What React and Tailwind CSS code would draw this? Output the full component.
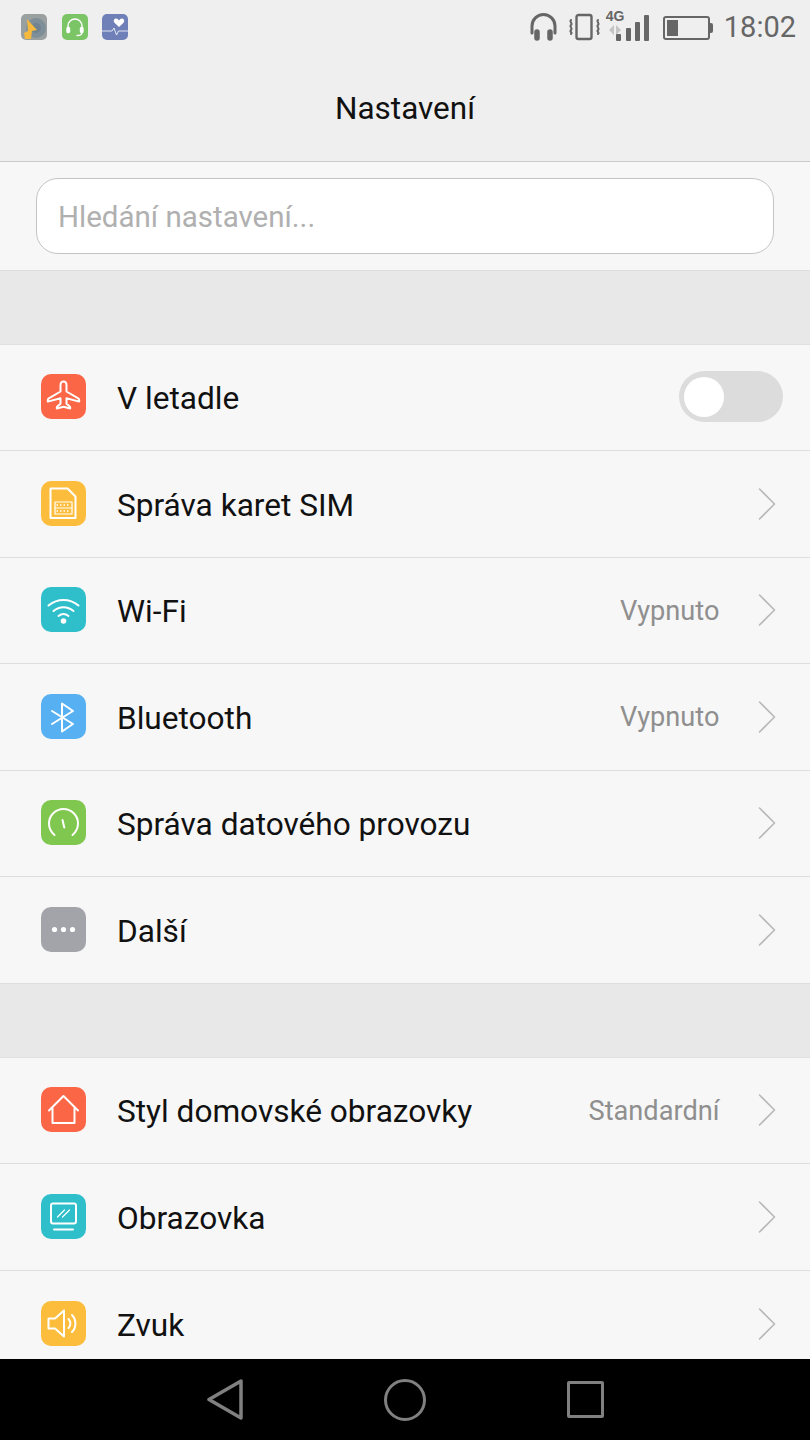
const font = "font-['Roboto',sans-serif]";

const Tile = ({ color, children }) => (
  <div className={`w-[45px] h-[45px] -mt-[1px] rounded-[10px] flex items-center justify-center shrink-0 ${color}`}>
    <svg width="45" height="45" viewBox="0 0 45 45" fill="none" stroke="#fff" strokeWidth="2" strokeLinecap="round" strokeLinejoin="round">
      {children}
    </svg>
  </div>
);

const Plane = () => (
  <path strokeWidth="2" d="M22.5 7.500c-1.800 0-3 1.800-3 4v6L7.800 24.400c-.7.400-1 1-1 1.700v1.500l12.700-3.400v5.600l-3 2.400c-.5.400-.7.800-.7 1.300v1l6.700-1.700 6.700 1.700v-1c0-.5-.2-.9-.7-1.300l-3-2.400v-5.600l12.700 3.400v-1.500c0-.7-.3-1.300-1-1.700L25.500 17.500v-6c0-2.200-1.200-4-3-4z" />
);

const Sim = () => (
  <>
    <path d="M9.500 7.500h17l8 8V37h-25z" />
    <rect x="14" y="21" width="17" height="12" strokeWidth="1.200" />
    <path strokeWidth="1.200" d="M14 27h17" />
    <path strokeWidth="1.500" strokeDasharray="1.500 2" strokeLinecap="butt" d="M15.500 24h14M15.500 30h14" />
  </>
);

const Wifi = () => (
  <>
    <path d="M7.500 18.500c9-7.500 21-7.500 30 0" />
    <path d="M12.500 24c6-5 14-5 20 0" />
    <path d="M17.500 29c3-2.400 7-2.400 10 0" />
    <circle cx="22.500" cy="34" r="2.800" fill="#fff" stroke="none" />
  </>
);

const Bt = () => <path d="M11 17l21 13-11 7.500v-28l11 7.500-21 13" />;

const Gauge = () => (
  <>
    <path d="M13.500 35c-3.500-3-5.500-7-5.500-11.500C8 15.500 14.500 9 22.500 9S37 15.500 37 23.500c0 4.500-2 8.500-5.500 11.500" />
    <path d="M21.500 20l1.800 7.500" />
  </>
);

const Dots = () => (
  <>
    <circle cx="13.500" cy="22.500" r="2.600" fill="#fff" stroke="none" />
    <circle cx="22.500" cy="22.500" r="2.600" fill="#fff" stroke="none" />
    <circle cx="31.500" cy="22.500" r="2.600" fill="#fff" stroke="none" />
  </>
);

const Home = () => <path d="M8 23.500L22.500 9 37 23.500M11.500 21v15h22V21" />;

const Screen = () => (
  <>
    <rect x="10" y="9.500" width="25" height="20" rx="2" />
    <path strokeWidth="1.200" d="M16.500 23l7-7M21.500 23l7-7" />
    <path d="M13 35.500h19" />
  </>
);

const Sound = () => (
  <>
    <path d="M7.500 17.500h6.500l9-8v26l-9-8H7.500z" />
    <path d="M27.500 18c2.500 2.500 2.500 6.500 0 9" />
    <path d="M31 14c4.500 4.500 4.500 12.500 0 17" />
  </>
);

const Chevron = () => (
  <svg className="mr-[34px] shrink-0" width="18" height="32" viewBox="0 0 18 32" fill="none" stroke="#b8b8b8" strokeWidth="1.600" strokeLinecap="round" strokeLinejoin="round">
    <path d="M1.500 1l15 15-15 15" />
  </svg>
);

const Row = ({ tile, icon, label, value, toggle, last }) => (
  <div className={`h-[106.5px] shrink-0 flex items-center pl-[40.5px] ${last ? "" : "border-b border-[#dedede]"}`}>
    <Tile color={tile}>{icon}</Tile>
    <span className="ml-[31.5px] pt-[3px] text-[31.6px] text-[#111] flex-1 whitespace-nowrap">{label}</span>
    {value && <span className="pt-[2px] text-[27.2px] text-[#8f8f8f] mr-[38.5px]">{value}</span>}
    {toggle ? (
      <div className="w-[104px] h-[51px] -mt-[1px] mr-[27px] rounded-full bg-[#dcdcdc] flex items-center pl-[5px]">
        <div className="w-[40px] h-[40px] rounded-full bg-white" />
      </div>
    ) : (
      <Chevron />
    )}
  </div>
);

export default function App() {
  return (
    <div className={`w-[810px] h-[1440px] flex flex-col overflow-hidden bg-[#f7f7f7] ${font}`}>
      {/* status bar + title */}
      <div className="h-[162px] shrink-0 bg-[#efefef] border-b border-[#c9c9c9]">
        <div className="h-[54px] flex items-center justify-between pl-[21px] pr-[14px]">
          <div className="flex items-center gap-[14.500px]">
            <div className="w-[26px] h-[26px] rounded-[5px] bg-[#9aa0a0] overflow-hidden">
              <svg width="26" height="26" viewBox="0 0 26 26">
                <circle cx="15" cy="14" r="10" fill="#7f8f99" />
                <circle cx="15" cy="14" r="5" fill="#6f8391" />
                <path d="M6 5l10 11-5 1-1 8H4l-1-6 4-2z" fill="#f5b93d" />
              </svg>
            </div>
            <div className="w-[26px] h-[26px] rounded-[5px] bg-[#7cc567]">
              <svg width="26" height="26" viewBox="0 0 26 26" fill="none" stroke="#fff" strokeWidth="1.400" strokeLinecap="round">
                <path d="M6 15v-3a7 7 0 0 1 14 0v3" />
                <rect x="5" y="13.500" width="2.500" height="5" rx="1" fill="#fff" />
                <rect x="18.500" y="13.500" width="2.500" height="5" rx="1" fill="#fff" />
                <path d="M20 18.500c0 2-2 3-5 3" />
              </svg>
            </div>
            <div className="w-[26px] h-[26px] rounded-[5px] bg-[#6f80b8]">
              <svg width="26" height="26" viewBox="0 0 26 26" fill="none">
                <path d="M17 13l-4.500-4.300C11 7 12 4.500 14 4.500c1.300 0 2.200.8 3 2 .8-1.200 1.700-2 3-2 2 0 3 2.500 1.500 4.200z" fill="#fff" />
                <path d="M0 17h10l2-3 2.500 7 2-4h9.500" stroke="#fff" strokeWidth="0.800" />
              </svg>
            </div>
          </div>
          <div className="flex items-center">
            <svg width="27" height="28" viewBox="0 0 27 28" fill="none" stroke="#666" strokeWidth="3" strokeLinecap="round">
              <path d="M2 20v-7a11.500 11.500 0 0 1 23 0v7" />
              <path strokeWidth="5.500" d="M7 19v6M20 19v6" />
            </svg>
            <svg className="ml-[12px]" width="31" height="28" viewBox="0 0 31 28" fill="none" stroke="#666" strokeWidth="2.400" strokeLinecap="round">
              <rect x="7.500" y="2" width="15" height="24" rx="2" />
              <path d="M2 7c-2 2 2 3 0 5s2 3 0 5 2 2 0 4M29 7c-2 2 2 3 0 5s2 3 0 5 2 2 0 4" strokeWidth="2" />
            </svg>
            <div className="relative ml-[6px] w-[43px] h-[32px] -mt-[5px]">
              <span className="absolute left-0 top-0 text-[14px] font-bold leading-[14px] text-[#666] font-['Liberation_Sans',sans-serif]">4G</span>
              <svg className="absolute left-[3px] top-[16px]" width="12" height="10" viewBox="0 0 12 10" fill="#c4c4c4">
                <path d="M5 0v10L0 5zM7 0l5 5-5 5z" />
              </svg>
              <div className="absolute right-0 bottom-0 flex items-end gap-[4.500px]">
                <div className="w-[5px] h-[7px] bg-[#666] rounded-[1px]" />
                <div className="w-[5px] h-[13px] bg-[#666] rounded-[1px]" />
                <div className="w-[4.500px] h-[19px] bg-[#666] rounded-[1px]" />
                <div className="w-[4.500px] h-[26px] bg-[#666] rounded-[1px]" />
              </div>
            </div>
            <div className="ml-[14px] flex items-center w-[50px] pt-[1px]">
              <div className="w-[47px] h-[24px] rounded-[3px] border-2 border-[#666] p-[2px]">
                <div className="w-[11px] h-full bg-[#666]" />
              </div>
              <div className="w-[3px] h-[10px] bg-[#666] rounded-r-[2px]" />
            </div>
            <span className="ml-[11px] pt-[2px] text-[29px] text-[#666]">18:02</span>
          </div>
        </div>
        <div className="h-[107px] pt-[3px] flex items-center justify-center text-[31.500px] text-[#111]">Nastavení</div>
      </div>

      {/* search */}
      <div className="h-[109px] shrink-0 pt-[16px] px-[36px] border-b border-[#dedede]">
        <div className="h-[76px] pt-[2px] rounded-[22px] bg-white border border-[#c4c4c4] flex items-center pl-[21px] text-[29.500px] text-[#b0b0b0]">
          Hledání nastavení...
        </div>
      </div>

      <div className="h-[73.6px] shrink-0 bg-[#e8e8e8] border-b border-[#e0e0e0]" />

      <Row tile="bg-[#fb6647]" icon={<Plane />} label="V letadle" toggle />
      <Row tile="bg-[#fcbd3c]" icon={<Sim />} label="Správa karet SIM" />
      <Row tile="bg-[#2ebfcb]" icon={<Wifi />} label="Wi-Fi" value="Vypnuto" />
      <Row tile="bg-[#56b0f2]" icon={<Bt />} label="Bluetooth" value="Vypnuto" />
      <Row tile="bg-[#80c750]" icon={<Gauge />} label="Správa datového provozu" />
      <Row tile="bg-[#a3a3aa]" icon={<Dots />} label="Další" />

      <div className="h-[74px] shrink-0 bg-[#e8e8e8] border-b border-[#e0e0e0]" />

      <div className="flex-1 min-h-0 overflow-hidden">
        <Row tile="bg-[#fb6647]" icon={<Home />} label="Styl domovské obrazovky" value="Standardní" />
        <Row tile="bg-[#2ebfcb]" icon={<Screen />} label="Obrazovka" />
        <Row tile="bg-[#fcbd3c]" icon={<Sound />} label="Zvuk" last />
      </div>

      {/* nav bar */}
      <div className="h-[81px] shrink-0 bg-black flex items-center justify-center">
        <div className="flex items-center gap-[141px]">
          <svg width="36" height="41" viewBox="0 0 36 41" fill="none" stroke="#808080" strokeWidth="3.500" strokeLinejoin="round">
            <path d="M34 2v37L2 20.500z" />
          </svg>
          <div className="w-[42px] h-[42px] rounded-full border-[3.500px] border-[#808080]" />
          <div className="w-[37px] h-[37px] rounded-[2px] border-[3.500px] border-[#808080]" />
        </div>
      </div>
    </div>
  );
}
